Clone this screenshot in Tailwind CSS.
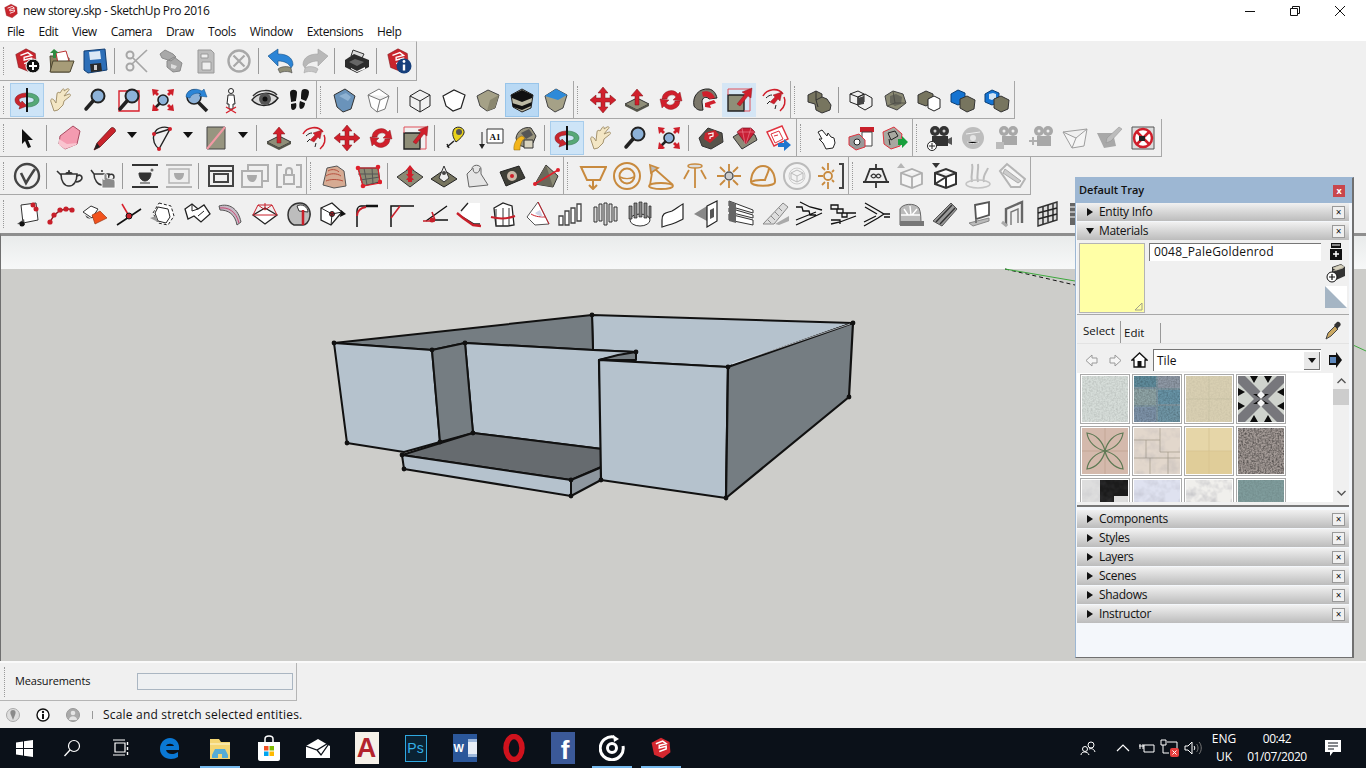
<!DOCTYPE html>
<html>
<head>
<meta charset="utf-8">
<title>new storey.skp - SketchUp Pro 2016</title>
<script src="https://cdn.jsdelivr.net/npm/@tailwindcss/browser@4"></script>
</head>
<body class="relative w-[1366px] h-[768px] overflow-hidden flex flex-col bg-[#f0f0f0] text-[#111] text-[12px] [font-family:'Open_Sans',sans-serif]">

<!-- shared icons -->
<svg class="absolute w-0 h-0">
  <defs>
    <filter id="n" x="0" y="0" width="100%" height="100%"><feTurbulence type="fractalNoise" baseFrequency=".55" numOctaves="2" seed="4"/><feColorMatrix values="0 0 0 0 0 0 0 0 0 0 0 0 0 0 0 1.6 0 0 0 -.55"/></filter>
    <filter id="m" x="0" y="0" width="100%" height="100%"><feTurbulence type="fractalNoise" baseFrequency=".09" numOctaves="3" seed="9"/><feColorMatrix values="0 0 0 0 .3 0 0 0 0 .3 0 0 0 0 .35 2.2 0 0 0 -.95"/></filter>
    <symbol id="logo" viewBox="0 0 28 28"><path d="M3 8 14 2l10 5 1 12-9 7-10-4z" fill="#c9252d" stroke="#7d1418" stroke-width=".6"/><path d="M8 9l8-3 4 3-8 2v3l8-2v3l-8 3" fill="none" stroke="#fff" stroke-width="1.500"/></symbol>
    <symbol id="orbit" viewBox="0 0 28 28"><path d="M14 7C7 7 2 10 2 14c0 3 2 5 5 6l-1 3 8-3-5-5-1 2c-1-1-2-2-2-3 0-2 4-3 8-3z" fill="#c8252d" stroke="#7d1418" stroke-width=".5"/><path d="M14 7c7 0 12 3 12 7 0 4-5 7-12 7v-4c4 0 7-1 7-3s-3-3-7-3z" fill="#56a877" stroke="#2b6b44" stroke-width=".5"/><path d="M14 2v24" stroke="#111" stroke-width="2"/></symbol>
    <symbol id="hand" viewBox="0 0 28 28"><path d="M7 25 4 16c-1-3 1-4 3-2l2 3 1-9c0-2 2-2 3-1l2-3c1-2 3-1 2 1l3-2c2-1 3 1 1 2l-4 5 5-2c2 0 2 2 0 3l-5 4-1 4-5 5z" fill="#f3e6c4" stroke="#a5946f"/></symbol>
    <symbol id="zoom" viewBox="0 0 28 28"><circle cx="17" cy="10" r="6.500" fill="#8db2d8" stroke="#222" stroke-width="2"/><path d="M12 15 5 23" stroke="#222" stroke-width="3.500" stroke-linecap="round"/></symbol>
    <symbol id="extents" viewBox="0 0 28 28"><circle cx="14" cy="14" r="5" fill="#8db2d8" stroke="#222" stroke-width="1.600"/><path d="M11 17l-6 6" stroke="#222" stroke-width="2.500"/><path d="M3 3l7 1-2 2 2 2-2 2-2-2-2 2zM25 3l-1 7-2-2-2 2-2-2 2-2-2-2zM25 25l-7-1 2-2-2-2 2-2 2 2 2-2z" fill="#cf1f2a"/><path d="M3 25l1-7 2 2 2 2 2 2-2 1z" fill="#cf1f2a"/></symbol>
    <symbol id="move" viewBox="0 0 28 28"><path d="M14 1l5 6h-3v5h5V9l6 5-6 5v-3h-5v5h3l-5 6-5-6h3v-5H7v3l-6-5 6-5v3h5V7H9z" fill="#d01f2b" stroke="#7d1418" stroke-width=".5"/></symbol>
    <symbol id="push" viewBox="0 0 28 28"><path d="M2 18l12-6 12 6-12 6z" fill="#8f8e78" stroke="#333"/><path d="M2 18v2l12 6 12-6v-2l-12 6z" fill="#55554a"/><path d="M14 3l6 7h-4v9h-4v-9H8z" fill="#d01f2b" stroke="#7d1418" stroke-width=".5"/></symbol>
    <symbol id="rotate" viewBox="0 0 28 28"><path d="M5 13a9 9 0 0 1 16-5l2-2 2 9-9-1 3-3a5 5 0 0 0-9 2zM23 15a9 9 0 0 1-16 5l-2 2-2-9 9 1-3 3a5 5 0 0 0 9-2z" fill="#d01f2b" stroke="#7d1418" stroke-width=".4"/></symbol>
    <symbol id="scale" viewBox="0 0 28 28"><path d="M3 9h16v16H3z" fill="#8f8e78" stroke="#222" stroke-width="1.400"/><path d="M3 3h22v22H19" fill="none" stroke="#e0505a"/><path d="M3 3v6" stroke="#e0505a"/><path d="M12 18 20 8l-3-2 10-4-1 10-3-2-8 10z" fill="#d01f2b" stroke="#7d1418" stroke-width=".4"/></symbol>
    <symbol id="offset" viewBox="0 0 28 28"><path d="M4 10C8 3 19 1 24 8" fill="none" stroke="#d01f2b" stroke-width="1.500"/><path d="M21 25c5-4 6-10 4-14" fill="none" stroke="#d01f2b" stroke-width="1.500"/><path d="M7 12c2-2 4-3 6-3M8 18l3-3M16 23l1-4" stroke="#222" fill="none"/><path d="M11 16l5-5-2-2 9-3-2 9-2-2-4 5z" fill="#d01f2b" stroke="#7d1418" stroke-width=".4"/></symbol>
    <symbol id="gbox" viewBox="0 0 28 28"><path d="M4 10 12 5l10 3 3 9-9 7-10-4z" fill="#8b8a74" stroke="#444"/><path d="M12 5l2 12-8 3M14 17l11 0" stroke="#55554a" fill="none"/></symbol>
    <symbol id="wire" viewBox="0 0 28 28"><path d="M4 10l10-6 10 5v11l-10 6-10-6zM4 10l10 5 10-6M14 15v11" fill="none" stroke="#222"/></symbol>
  </defs>
</svg>

<!-- title bar -->
<header class="h-[22px] bg-white flex items-center pl-[3px] shrink-0">
  <svg class="w-4 h-4"><use href="#logo"/></svg>
  <span class="ml-[4px] text-[12px] tracking-[-0.4px]">new storey.skp - SketchUp Pro 2016</span>
  <div class="ml-auto flex items-center pr-[20px] gap-[33px]">
    <svg class="w-3 h-3" viewBox="0 0 12 12"><path d="M1 6.500h10" stroke="#111"/></svg>
    <svg class="w-3 h-3" viewBox="0 0 12 12"><path d="M1.500 3.500h7v7h-7zM3.500 3V1.500h7v7H9" fill="none" stroke="#111"/></svg>
    <svg class="w-3 h-3" viewBox="0 0 12 12"><path d="M1 1l10 10M11 1 1 11" stroke="#111"/></svg>
  </div>
</header>

<!-- menu -->
<nav class="h-[19px] bg-white flex items-center pl-[7px] gap-[14px] shrink-0 text-[12px] tracking-[-0.4px]">
  <span>File</span><span>Edit</span><span>View</span><span>Camera</span><span>Draw</span><span>Tools</span><span>Window</span><span>Extensions</span><span>Help</span>
</nav>

<!-- toolbar rows -->
<div class="h-[40px] flex shrink-0">
  <div class="flex items-center pl-[3px] border-r border-b border-t border-t-[#e4e4e4] border-[#a8a8a8]">
    <i class="w-[7px] h-[28px] border-l border-dotted border-[#999]"></i>
    <b class="w-[34px] h-[34px] flex items-center justify-center"><svg class="w-7 h-7" viewBox="0 0 28 28"><use href="#logo" width="26" height="26"/><circle cx="20" cy="19" r="7" fill="#111" stroke="#fff"/><path d="M16 19h8M20 15v8" stroke="#fff" stroke-width="2"/></svg></b>
    <b class="w-[34px] h-[34px] flex items-center justify-center"><svg class="w-7 h-7" viewBox="0 0 28 28"><path d="M3 9h7l2 2h10v14H4z" fill="#8a7f5c" stroke="#4d4630"/><path d="M9 6l10-2 3 10-11 2z" fill="#fff" stroke="#b33"/><path d="M6 14h21l-4 11H3z" fill="#a79c78" stroke="#4d4630"/><path d="M7 2l5 4H9v5H6V6H3z" fill="#2f8a3f"/></svg></b>
    <b class="w-[34px] h-[34px] flex items-center justify-center"><svg class="w-7 h-7" viewBox="0 0 28 28"><path d="M3 4l21-2 2 21-19 3-4-3z" fill="#2d6fb8" stroke="#123e72"/><path d="M8 5l11-1 1 8-11 1z" fill="#dbe8f5"/><path d="M9 17l11-1 1 8-11 1z" fill="#2a2a2a"/><path d="M13 18l3 0 0 5-3 0z" fill="#ccc"/></svg></b>
    <i class="w-px h-[26px] bg-[#9a9a9a] ml-[2px] mr-[5px]"></i>
    <b class="w-[34px] h-[34px] flex items-center justify-center"><svg class="w-7 h-7" viewBox="0 0 28 28"><path d="M9 17 24 3M10 11l14 14" stroke="#a6a6a6" stroke-width="1.700" fill="none"/><circle cx="7" cy="8" r="3.500" fill="none" stroke="#a6a6a6" stroke-width="2"/><circle cx="7" cy="20" r="3.500" fill="none" stroke="#a6a6a6" stroke-width="2"/></svg></b>
    <b class="w-[34px] h-[34px] flex items-center justify-center"><svg class="w-7 h-7" viewBox="0 0 28 28"><path d="M3 7l5-4 8 4 3 3-5 4-9-3zM10 14l7-4 8 6-2 8-7 1-6-5z" fill="#a8a8a8" stroke="#8a8a8a"/><path d="M14 17l6 2-2 3-4-1z" fill="#ddd"/></svg></b>
    <b class="w-[34px] h-[34px] flex items-center justify-center"><svg class="w-7 h-7" viewBox="0 0 28 28"><path d="M7 3h13l3 3v20H7z" fill="#bdbdbd" stroke="#999"/><path d="M10 7h7v4h-7zM11 15h9v8h-9z" fill="#eee" stroke="#999"/></svg></b>
    <b class="w-[34px] h-[34px] flex items-center justify-center"><svg class="w-7 h-7" viewBox="0 0 28 28"><circle cx="14" cy="14" r="10.500" fill="none" stroke="#a8a8a8" stroke-width="2.400"/><path d="M8.500 8.500l11 11M19.500 8.500l-11 11" stroke="#a8a8a8" stroke-width="2.200"/></svg></b>
    <i class="w-px h-[26px] bg-[#9a9a9a] ml-[2px] mr-[5px]"></i>
    <b class="w-[34px] h-[34px] flex items-center justify-center"><svg class="w-7 h-7" viewBox="0 0 28 28"><path d="M1 9l10-7v5c8 0 15 3 15 11l-2 3c-2-5-7-7-13-7v5z" fill="#2c85d6" stroke="#124f87" stroke-width=".6"/><path d="M11 22c4-3 10-3 13-1l1 5c-3-2-9-2-12 0z" fill="#8f8e78" stroke="#444" stroke-width=".6"/></svg></b>
    <b class="w-[34px] h-[34px] flex items-center justify-center"><svg class="w-7 h-7" viewBox="0 0 28 28"><path d="M27 9 17 2v5C9 7 2 10 2 18l2 3c2-5 7-7 13-7v5z" fill="#b8b8b8" stroke="#a0a0a0" stroke-width=".6"/><path d="M17 22c-4-3-10-3-13-1l-1 5c3-2 9-2 12 0z" fill="#c4c4c4" stroke="#a6a6a6" stroke-width=".6"/></svg></b>
    <i class="w-px h-[26px] bg-[#9a9a9a] ml-[2px] mr-[5px]"></i>
    <b class="w-[34px] h-[34px] flex items-center justify-center"><svg class="w-7 h-7" viewBox="0 0 28 28"><path d="M10 3l11 4-3 6-10-4z" fill="#ddd" stroke="#333"/><path d="M2 13l9-6 15 6v7l-12 6-12-6z" fill="#2c2c2c"/><path d="M6 15l6-3 9 3-7 4z" fill="#666"/><path d="M8 21l6 3 8-4v2l-8 3-6-3z" fill="#fff"/></svg></b>
    <i class="w-px h-[26px] bg-[#9a9a9a] ml-[2px] mr-[5px]"></i>
    <b class="w-[34px] h-[34px] flex items-center justify-center"><svg class="w-7 h-7" viewBox="0 0 28 28"><use href="#logo" width="26" height="26"/><circle cx="19" cy="19" r="7.500" fill="#17407c"/><path d="M19 17.500v6" stroke="#fff" stroke-width="2.400"/><circle cx="19" cy="14.500" r="1.400" fill="#fff"/></svg></b>
  </div>
</div>

<div class="h-[38px] flex shrink-0">
  <div class="flex border-b border-r border-[#a8a8a8]">
  <div class="flex items-center pl-[3px]">
    <i class="w-[7px] h-[28px] border-l border-dotted border-[#999]"></i>
    <b class="w-[34px] h-[34px] flex items-center justify-center bg-[#cde4f7] border border-[#a8cdec]"><svg class="w-7 h-7"><use href="#orbit"/></svg></b>
    <b class="w-[34px] h-[34px] flex items-center justify-center"><svg class="w-7 h-7"><use href="#hand"/></svg></b>
    <b class="w-[34px] h-[34px] flex items-center justify-center"><svg class="w-7 h-7"><use href="#zoom"/></svg></b>
    <b class="w-[34px] h-[34px] flex items-center justify-center"><svg class="w-7 h-7" viewBox="0 0 28 28"><path d="M4 5h20v20H4z" fill="none" stroke="#d8202c" stroke-width="1.400"/><use href="#zoom" width="28" height="28"/></svg></b>
    <b class="w-[34px] h-[34px] flex items-center justify-center"><svg class="w-7 h-7"><use href="#extents"/></svg></b>
    <b class="w-[34px] h-[34px] flex items-center justify-center"><svg class="w-7 h-7" viewBox="0 0 28 28"><circle cx="11" cy="11" r="7" fill="#8db2d8" stroke="#222" stroke-width="1.500"/><path d="M3 11C3 4 12 1 19 5l2-2 3 8-8-1 2-2c-4-2-10 0-11 4z" fill="#2c85d6" stroke="#124f87" stroke-width=".5"/><path d="M15 16l9 9" stroke="#222" stroke-width="3.500"/></svg></b>
    <b class="w-[34px] h-[34px] flex items-center justify-center"><svg class="w-7 h-7" viewBox="0 0 28 28"><circle cx="14" cy="5" r="2.500" fill="#fff" stroke="#222"/><path d="M11 9h6l1 9h-2v5h-4v-5h-2z" fill="#fff" stroke="#222"/><path d="M9 21l10 6M19 21 9 27" stroke="#d8202c" stroke-width="1.400"/></svg></b>
    <b class="w-[34px] h-[34px] flex items-center justify-center"><svg class="w-7 h-7" viewBox="0 0 28 28"><path d="M1 14C7 6 19 5 27 12c-6 9-19 10-26 2z" fill="#d8d8d8" stroke="#222" stroke-width="1.400"/><circle cx="14" cy="13" r="6" fill="#555"/><circle cx="14" cy="13" r="2.500" fill="#111"/><path d="M2 10C8 3 20 3 26 9" fill="none" stroke="#333" stroke-width="1.500"/></svg></b>
    <b class="w-[34px] h-[34px] flex items-center justify-center"><svg class="w-7 h-7" viewBox="0 0 28 28"><path d="M5 7c0-4 6-4 7-1 0 5-1 7-1 9l-5 1c0-3-1-6-1-9zM6 18l5-1c1 3 0 7-3 7-2 0-2-3-2-6zM17 4c2-2 7-1 7 2 0 4-2 7-3 9l-5-2c0-3 0-7 1-9zM15 15l5 2c0 3-2 6-4 6s-2-5-1-8z" fill="#151515"/></svg></b>
  </div>
  <div class="flex items-center pl-[3px] border-l border-[#a8a8a8]">
    <i class="w-[7px] h-[28px] border-l border-dotted border-[#999]"></i>
    <b class="w-[34px] h-[34px] flex items-center justify-center"><svg class="w-7 h-7" viewBox="0 0 28 28"><path d="M4 9l11-6 10 7-4 13-8 3-6-5z" fill="#6a93ba" stroke="#333"/><path d="M9 10l7-3 5 4-3 4z" fill="#8fb2d2"/></svg></b>
    <b class="w-[34px] h-[34px] flex items-center justify-center"><svg class="w-7 h-7" viewBox="0 0 28 28"><path d="M4 9l11-6 10 7-4 13-8 3-6-5zM4 9l12 5 9-4M16 14l-3 12" fill="#fff" stroke="#777"/></svg></b>
    <i class="w-px h-[26px] bg-[#9a9a9a] ml-[2px] mr-[5px]"></i>
    <b class="w-[34px] h-[34px] flex items-center justify-center"><svg class="w-7 h-7"><use href="#wire"/></svg></b>
    <b class="w-[34px] h-[34px] flex items-center justify-center"><svg class="w-7 h-7" viewBox="0 0 28 28"><path d="M3 10l11-6 11 5-4 13-8 3-7-5z" fill="#fff" stroke="#222" stroke-width="1.200"/></svg></b>
    <b class="w-[34px] h-[34px] flex items-center justify-center"><svg class="w-7 h-7" viewBox="0 0 28 28"><path d="M3 10l11-6 11 5-4 13-8 3-7-5z" fill="#a5a187" stroke="#444"/><path d="M21 22l4-13-9 5-3 11z" fill="#8a876f"/></svg></b>
    <b class="w-[34px] h-[34px] flex items-center justify-center bg-[#b9d9f4] border border-[#98c5ea]"><svg class="w-7 h-7" viewBox="0 0 28 28"><path d="M3 9l11-6 11 6-2 13-9 4-9-5z" fill="#bbb8a3" stroke="#222"/><path d="M3 9l11-5 11 5-1 3-10 4-10-4zM4 17l10 3 10-4-1 4-9 4-9-3z" fill="#111"/></svg></b>
    <b class="w-[34px] h-[34px] flex items-center justify-center"><svg class="w-7 h-7" viewBox="0 0 28 28"><path d="M3 10l11-7 11 6-4 13-8 4-7-5z" fill="#a5a187" stroke="#444"/><path d="M3 10l11-7 11 6-9 5z" fill="#2e8ad8"/></svg></b>
  </div>
  <div class="flex items-center pl-[3px] border-l border-[#a8a8a8]">
    <i class="w-[9px] h-[28px] border-l border-dotted border-[#999]"></i>
    <b class="w-[34px] h-[34px] flex items-center justify-center"><svg class="w-7 h-7"><use href="#move"/></svg></b>
    <b class="w-[34px] h-[34px] flex items-center justify-center"><svg class="w-7 h-7"><use href="#push"/></svg></b>
    <b class="w-[34px] h-[34px] flex items-center justify-center"><svg class="w-7 h-7"><use href="#rotate"/></svg></b>
    <b class="w-[34px] h-[34px] flex items-center justify-center"><svg class="w-7 h-7" viewBox="0 0 28 28"><path d="M3 20C1 10 8 2 18 3c5 1 7 5 8 9l-8 1c-2-3-7-2-7 3l1 8c-4 1-7-1-9-4z" fill="#7b776a" stroke="#222"/><path d="M11 6c6-2 11 1 13 6l-5 1c-2-2-4-3-7-2z" fill="#d01f2b"/><path d="M14 17l9-3 2 3-6 2 1 3-6-1z" fill="#d01f2b"/></svg></b>
    <b class="w-[34px] h-[34px] flex items-center justify-center bg-[#d5e6f5]"><svg class="w-7 h-7"><use href="#scale"/></svg></b>
    <b class="w-[34px] h-[34px] flex items-center justify-center"><svg class="w-7 h-7"><use href="#offset"/></svg></b>
  </div>
  <div class="flex items-center pl-[3px] border-l border-[#a8a8a8]">
    <i class="w-[8px] h-[28px] border-l border-dotted border-[#999]"></i>
    <b class="w-[34px] h-[34px] flex items-center justify-center"><svg class="w-7 h-7" viewBox="0 0 28 28"><path d="M3 9l8-4 6 3v3l5 2 4 6-1 5-8 3-6-3-1-6-7-2z" fill="#77755f" stroke="#333"/><path d="M11 5v9l6-3M11 14l2 7" stroke="#333" fill="none"/></svg></b>
    <i class="w-px h-[26px] bg-[#9a9a9a] ml-[2px] mr-[5px]"></i>
    <b class="w-[34px] h-[34px] flex items-center justify-center"><svg class="w-7 h-7" viewBox="0 0 28 28"><path d="M3 8l8-3 6 3v8l-6 3-8-3zM11 11l7-3 7 4v8l-7 4-7-4zM3 8l8 3v8M17 8l-6 3" fill="none" stroke="#222"/><path d="M11 12l6-2v8l-6 1z" fill="#444"/></svg></b>
    <b class="w-[34px] h-[34px] flex items-center justify-center"><svg class="w-7 h-7" viewBox="0 0 28 28"><use href="#gbox" width="28" height="28"/><path d="M9 10l6-2 6 3-1 7-6 2-5-3z" fill="#444" opacity=".5"/></svg></b>
    <b class="w-[34px] h-[34px] flex items-center justify-center"><svg class="w-7 h-7" viewBox="0 0 28 28"><path d="M3 9l8-4 7 3v8l-7 4-8-3z" fill="#77755f" stroke="#333"/><path d="M13 13l6-3 6 3v9l-6 3-6-3z" fill="#fff" stroke="#222"/></svg></b>
    <b class="w-[34px] h-[34px] flex items-center justify-center"><svg class="w-7 h-7" viewBox="0 0 28 28"><path d="M2 8l7-4 7 3v9l-7 3-7-3z" fill="#1473d1" stroke="#0c3f75"/><path d="M11 13l7-3 8 4-1 9-7 3-7-4z" fill="#77755f" stroke="#333"/></svg></b>
    <b class="w-[34px] h-[34px] flex items-center justify-center"><svg class="w-7 h-7" viewBox="0 0 28 28"><path d="M2 8l7-4 7 3v9l-7 3-7-3z" fill="#1473d1" stroke="#0c3f75"/><path d="M6 8l4-1 3 1v4l-4 2-3-1z" fill="#cfe3f5"/><path d="M11 13l7-3 8 4-1 9-7 3-7-4z" fill="#77755f" stroke="#333"/></svg></b>
  </div>
  </div>
</div>

<div class="h-[38px] flex shrink-0">
  <div class="flex border-b border-r border-[#a8a8a8]">
  <div class="flex items-center pl-[3px]">
    <i class="w-[7px] h-[28px] border-l border-dotted border-[#999]"></i>
    <b class="w-[34px] h-[34px] flex items-center justify-center"><svg class="w-7 h-7" viewBox="0 0 28 28"><path d="M9 5l11 11h-5l3 7-3 1-3-7-3 3z" fill="#111"/></svg></b>
    <i class="w-px h-[26px] bg-[#9a9a9a] ml-[2px] mr-[5px]"></i>
    <b class="w-[34px] h-[34px] flex items-center justify-center"><svg class="w-7 h-7" viewBox="0 0 28 28"><path d="M5 12 18 2l7 5-3 13-12 5-6-5z" fill="#f49bb0" stroke="#a84a60"/><path d="M4 15l8 5 10-1-1 2-11 4-6-4z" fill="#f9c4cf"/></svg></b>
    <b class="w-[34px] h-[34px] flex items-center justify-center ml-[2px]"><svg class="w-7 h-7" viewBox="0 0 28 28"><path d="M3 26l3-7L20 4c2-2 6 2 4 4L9 23z" fill="#c9242c" stroke="#5c1013" stroke-width=".7"/><path d="M3 26l3-7 3 4z" fill="#222"/></svg></b>
    <b class="w-[23px] h-[34px] flex items-center justify-center"><svg class="w-[12px] h-[8px] mb-[6px] -ml-[4px]" viewBox="0 0 12 8"><path d="M1 1h10L6 7z" fill="#111"/></svg></b>
    <b class="w-[34px] h-[34px] flex items-center justify-center"><svg class="w-7 h-7" viewBox="0 0 28 28"><path d="M6 10C9 2 19 2 22 5L11 25C7 22 4 16 6 10zM6 10l16-5" fill="none" stroke="#222" stroke-width="1.400"/><circle cx="6" cy="10" r="2" fill="#d01f2b"/><circle cx="22" cy="5" r="2" fill="#d01f2b"/><circle cx="11" cy="25" r="2" fill="#d01f2b"/></svg></b>
    <b class="w-[20px] h-[34px] flex items-center justify-center"><svg class="w-[12px] h-[8px] mb-[6px] -ml-[3px]" viewBox="0 0 12 8"><path d="M1 1h10L6 7z" fill="#111"/></svg></b>
    <b class="w-[34px] h-[34px] flex items-center justify-center"><svg class="w-7 h-7" viewBox="0 0 28 28"><path d="M5 3h18v22H5z" fill="#979580" stroke="#444"/><path d="M5 25 23 3" stroke="#f29aa5" stroke-width="2"/></svg></b>
    <b class="w-[20px] h-[34px] flex items-center justify-center"><svg class="w-[12px] h-[8px] mb-[6px]" viewBox="0 0 12 8"><path d="M1 1h10L6 7z" fill="#111"/></svg></b>
    <i class="w-px h-[26px] bg-[#9a9a9a] ml-[3px] mr-[5px]"></i>
    <b class="w-[34px] h-[34px] flex items-center justify-center"><svg class="w-7 h-7"><use href="#push"/></svg></b>
    <b class="w-[34px] h-[34px] flex items-center justify-center"><svg class="w-7 h-7"><use href="#offset"/></svg></b>
    <b class="w-[34px] h-[34px] flex items-center justify-center"><svg class="w-7 h-7"><use href="#move"/></svg></b>
    <b class="w-[34px] h-[34px] flex items-center justify-center"><svg class="w-7 h-7"><use href="#rotate"/></svg></b>
    <b class="w-[34px] h-[34px] flex items-center justify-center"><svg class="w-7 h-7"><use href="#scale"/></svg></b>
    <i class="w-px h-[26px] bg-[#9a9a9a] ml-[2px] mr-[5px]"></i>
    <b class="w-[34px] h-[34px] flex items-center justify-center"><svg class="w-7 h-7" viewBox="0 0 28 28"><path d="M11 5c4-4 11-1 10 4-1 3-4 6-8 9-2-3-5-8-2-13z" fill="#e9d21b" stroke="#222"/><circle cx="16" cy="8" r="3" fill="#555"/><path d="M11 17l-7 6M4 20l2 4" stroke="#222" stroke-width="1.500"/></svg></b>
    <b class="w-[34px] h-[34px] flex items-center justify-center"><svg class="w-7 h-7" viewBox="0 0 28 28"><path d="M10 5h16v14H10z" fill="#fff" stroke="#333"/><text x="18" y="15.500" text-anchor="middle" font-size="9" font-family="Liberation Serif,serif" fill="#111">A1</text><path d="M5 8v13" stroke="#222"/><path d="M2 20h6l-3 5z" fill="#222"/></svg></b>
    <b class="w-[34px] h-[34px] flex items-center justify-center"><svg class="w-7 h-7" viewBox="0 0 28 28"><path d="M5 14c1-7 8-12 15-10l5 8-3 7-8 4-7-2z" fill="#9a957e" stroke="#333"/><path d="M10 9l8-4 4 6-7 4z" fill="#555"/><path d="M3 26c-1-6 3-13 8-14l3 2c-3 2-5 6-5 12z" fill="#f3b51c" stroke="#8a6508" stroke-width=".5"/><path d="M13 16h9v8h-9z" fill="#d8d3bf" stroke="#333"/></svg></b>
    <i class="w-px h-[26px] bg-[#9a9a9a] ml-[2px] mr-[5px]"></i>
    <b class="w-[34px] h-[34px] flex items-center justify-center bg-[#cde4f7] border border-[#a8cdec]"><svg class="w-7 h-7"><use href="#orbit"/></svg></b>
    <b class="w-[34px] h-[34px] flex items-center justify-center"><svg class="w-7 h-7"><use href="#hand"/></svg></b>
    <b class="w-[34px] h-[34px] flex items-center justify-center"><svg class="w-7 h-7"><use href="#zoom"/></svg></b>
    <b class="w-[34px] h-[34px] flex items-center justify-center"><svg class="w-7 h-7"><use href="#extents"/></svg></b>
    <i class="w-px h-[26px] bg-[#9a9a9a] ml-[2px] mr-[5px]"></i>
    <b class="w-[34px] h-[34px] flex items-center justify-center"><svg class="w-7 h-7" viewBox="0 0 28 28"><path d="M2 14 11 4l14 5 1 9-12 7-9-3z" fill="#57534a" stroke="#333"/><path d="M8 9l10-3 4 5-9 8-6-4z" fill="#c9252d"/><path d="M11 10l5-1v3l-3 1v2" fill="none" stroke="#fff" stroke-width="1.200"/></svg></b>
    <b class="w-[34px] h-[34px] flex items-center justify-center"><svg class="w-7 h-7" viewBox="0 0 28 28"><path d="M2 13l9 12 15-9-2-5-11-5z" fill="#8d8a78" stroke="#333"/><path d="M6 8l5-4h9l4 4-9 12z" fill="#c81f35" stroke="#761020" stroke-width=".7"/><path d="M6 8h18M11 4l3 16M20 4l-5 16" stroke="#f08a99" stroke-width=".6"/></svg></b>
    <b class="w-[34px] h-[34px] flex items-center justify-center"><svg class="w-7 h-7" viewBox="0 0 28 28"><path d="M2 8 17 2l6 13-14 7z" fill="#fff" stroke="#e0333f" stroke-width="1.400"/><path d="M6 10l8-3 4 8-8 4zM9 12l4-1" fill="none" stroke="#e0333f"/><path d="M13 19h6v-4l7 6-7 6v-4h-6z" fill="#1f76cf"/></svg></b>
  </div>
  <div class="flex items-center pl-[3px] border-l border-[#a8a8a8]">
    <i class="w-[10px] h-[28px] border-l border-dotted border-[#999]"></i>
    <b class="w-[34px] h-[34px] flex items-center justify-center"><svg class="w-7 h-7" viewBox="0 0 28 28"><path d="M5 8l4-2 5 6 1-3 3 4 3 1 1 5-2 5-7 1-3-6-4-4 3 0z" fill="#fff" stroke="#222"/></svg></b>
    <b class="w-[34px] h-[34px] flex items-center justify-center"><svg class="w-7 h-7" viewBox="0 0 28 28"><path d="M13 3h14v5H13z" fill="#c81f2a"/><path d="M15 8h10v14H15z" fill="#fff" stroke="#444"/><path d="M2 13l10-3 6 6v7l-9 3-7-5z" fill="#999" stroke="#e0333f"/><circle cx="10" cy="18" r="3" fill="#fff" stroke="#222"/></svg></b>
    <b class="w-[34px] h-[34px] flex items-center justify-center"><svg class="w-7 h-7" viewBox="0 0 28 28"><path d="M2 8l11-5 8 7-2 12-9 3-7-5z" fill="#a8a8a0" stroke="#e0333f"/><path d="M7 9l7-2 3 5-7 4zM8 15l1 6" stroke="#222" fill="none"/><path d="M17 15h4v-3l6 6-6 6v-3h-4z" fill="#18a03d"/></svg></b>
  </div>
  <div class="flex items-center pl-[3px] border-l border-[#a8a8a8] pr-[1px]">
    <i class="w-[6px] h-[28px] border-l border-dotted border-[#999]"></i>
    <b class="w-[34px] h-[34px] flex items-center justify-center"><svg class="w-7 h-7" viewBox="0 0 28 28"><circle cx="10" cy="7" r="5" fill="#333"/><circle cx="19" cy="7" r="5" fill="#333"/><circle cx="10" cy="7" r="1.500" fill="#ccc"/><circle cx="19" cy="7" r="1.500" fill="#ccc"/><path d="M7 12h16v10H7z" fill="#333"/><path d="M23 15l4-2v8l-4-2z" fill="#555"/><circle cx="7" cy="22" r="4.500" fill="#fff" stroke="#222"/><path d="M4 22h6M7 19v6" stroke="#222"/></svg></b>
    <b class="w-[34px] h-[34px] flex items-center justify-center"><svg class="w-7 h-7" viewBox="0 0 28 28"><circle cx="14" cy="14" r="11" fill="#bdbdbd"/><circle cx="14" cy="14" r="3" fill="#e5e5e5"/><path d="M7 10l14-2M8 18c3 2 8 2 12 0" stroke="#eee"/></svg></b>
    <b class="w-[34px] h-[34px] flex items-center justify-center"><svg class="w-7 h-7" viewBox="0 0 28 28"><circle cx="11" cy="7" r="5" fill="#a8a8a8"/><circle cx="20" cy="7" r="5" fill="#a8a8a8"/><circle cx="11" cy="7" r="1.500" fill="#eee"/><circle cx="20" cy="7" r="1.500" fill="#eee"/><path d="M9 12h15v9H9z" fill="#a8a8a8"/><path d="M3 18h8v7H3z" fill="#bbb"/></svg></b>
    <b class="w-[34px] h-[34px] flex items-center justify-center"><svg class="w-7 h-7" viewBox="0 0 28 28"><circle cx="12" cy="7" r="5" fill="#a8a8a8"/><circle cx="21" cy="7" r="5" fill="#a8a8a8"/><circle cx="12" cy="7" r="1.500" fill="#eee"/><circle cx="21" cy="7" r="1.500" fill="#eee"/><path d="M10 12h14v10H10z" fill="#a8a8a8"/><path d="M2 17h8M6 13v8" stroke="#b0b0b0" stroke-width="2"/></svg></b>
    <b class="w-[34px] h-[34px] flex items-center justify-center"><svg class="w-7 h-7" viewBox="0 0 28 28"><path d="M2 8l24-3-3 17-12 2zM2 8l13 6 11-9M11 24l4-10" fill="#f5f5f5" stroke="#9e9e9e"/></svg></b>
    <b class="w-[34px] h-[34px] flex items-center justify-center"><svg class="w-7 h-7" viewBox="0 0 28 28"><path d="M2 9h16l3 13-12 2z" fill="#a8a8a8"/><path d="M12 14l12-11 3 2-11 12-5 2z" fill="#bcbcbc" stroke="#8f8f8f" stroke-width=".5"/></svg></b>
    <b class="w-[34px] h-[34px] flex items-center justify-center"><svg class="w-7 h-7" viewBox="0 0 28 28"><path d="M3 3h22v22H3z" fill="#ddd" stroke="#555"/><circle cx="14" cy="14" r="9" fill="#fff" stroke="#d01f2b" stroke-width="2.500"/><path d="M8 8l12 12M20 8 8 20" stroke="#d01f2b" stroke-width="2.500"/><path d="M10 12h6v5h-6z" fill="#222"/></svg></b>
  </div>
  </div>
</div>

<div class="h-[38px] flex shrink-0">
  <div class="flex border-b border-r border-[#a8a8a8]">
  <div class="flex items-center pl-[3px]">
    <i class="w-[7px] h-[28px] border-l border-dotted border-[#999]"></i>
    <b class="w-[34px] h-[34px] flex items-center justify-center"><svg class="w-7 h-7" viewBox="0 0 28 28"><circle cx="14" cy="14" r="12" fill="#f0f0f0" stroke="#444" stroke-width="2.400"/><path d="M8 11l5 10c3-5 6-10 9-14" fill="none" stroke="#444" stroke-width="2.600"/></svg></b>
    <i class="w-px h-[26px] bg-[#9a9a9a] ml-[2px] mr-[5px]"></i>
    <b class="w-[34px] h-[34px] flex items-center justify-center"><svg class="w-7 h-7" viewBox="0 0 28 28"><path d="M6 12h16c0 7-3 12-8 12s-8-5-8-12zM13 9h2M11 12c0-2 6-2 6 0M22 14c3-2 5 0 5 2s-3 4-6 4M6 13 2 9" fill="none" stroke="#333" stroke-width="1.600"/></svg></b>
    <b class="w-[34px] h-[34px] flex items-center justify-center"><svg class="w-7 h-7" viewBox="0 0 28 28"><path d="M5 12h15c0 6-3 11-7 11s-8-5-8-11zM20 13c3-2 5 0 5 2s-3 3-5 3M5 12 2 8M12 9h2" fill="none" stroke="#333" stroke-width="1.500"/><path d="M13 26v-8c0-2 2-2 2 0v-5c0-2 3-2 3 0v3l5 1c2 0 3 1 3 3v6z" fill="#8a8a8a" stroke="#fff" stroke-width=".8"/></svg></b>
    <i class="w-px h-[26px] bg-[#9a9a9a] ml-[2px] mr-[5px]"></i>
    <b class="w-[34px] h-[34px] flex items-center justify-center"><svg class="w-7 h-7" viewBox="0 0 28 28"><path d="M1 3h26M1 25h26" stroke="#333" stroke-width="2"/><path d="M8 11h12c0 5-3 8-6 8s-6-3-6-8zM9 21h10" fill="#333" stroke="#333"/><circle cx="21" cy="8" r="1.500" fill="#666"/></svg></b>
    <b class="w-[34px] h-[34px] flex items-center justify-center"><svg class="w-7 h-7" viewBox="0 0 28 28"><path d="M1 3h26M1 25h26" stroke="#b5b5b5" stroke-width="2"/><path d="M4 7h20v14H4z" fill="#eee" stroke="#b5b5b5" stroke-width="1.500"/><path d="M9 11h10c0 4-2 7-5 7s-5-3-5-7z" fill="#aaa"/></svg></b>
    <i class="w-px h-[26px] bg-[#9a9a9a] ml-[2px] mr-[5px]"></i>
    <b class="w-[34px] h-[34px] flex items-center justify-center"><svg class="w-7 h-7" viewBox="0 0 28 28"><path d="M2 4h24v20H2zM2 9h24M7 12h14v8H7z" fill="none" stroke="#444" stroke-width="2"/></svg></b>
    <b class="w-[34px] h-[34px] flex items-center justify-center"><svg class="w-7 h-7" viewBox="0 0 28 28"><path d="M1 9h20v16H1zM7 9V3h20v16h-6" fill="none" stroke="#b0b0b0" stroke-width="2"/><path d="M6 13h10c0 4-2 7-5 7s-5-3-5-7z" fill="#aaa"/></svg></b>
    <b class="w-[34px] h-[34px] flex items-center justify-center"><svg class="w-7 h-7" viewBox="0 0 28 28"><path d="M7 3H2v22h5M21 3h5v22h-5" fill="none" stroke="#b0b0b0" stroke-width="2"/><path d="M9 13h10v9H9zM11 13V9c0-4 6-4 6 0v4" fill="none" stroke="#b0b0b0" stroke-width="2"/></svg></b>
  </div>
  <div class="flex items-center pl-[3px] border-l border-[#a8a8a8]">
    <i class="w-[7px] h-[28px] border-l border-dotted border-[#999]"></i>
    <b class="w-[34px] h-[34px] flex items-center justify-center"><svg class="w-7 h-7" viewBox="0 0 28 28"><path d="M3 23 7 6l10-2 7 5 2 15-12 2z" fill="#d6ab93" stroke="#555"/><path d="M8 9c3-2 8-2 11 1M6 14c4-3 11-3 15 0M6 19c4-2 12-2 17 0" stroke="#b74f3c" fill="none"/></svg></b>
    <b class="w-[34px] h-[34px] flex items-center justify-center"><svg class="w-7 h-7" viewBox="0 0 28 28"><path d="M4 6l20 0 2 14-17 4z" fill="#8b8a74" stroke="#333"/><path d="M10 6l3 17M18 6l1 16M4 12l21 0M6 18l20-3" stroke="#555" fill="none"/><g fill="#e0202c"><circle cx="4" cy="6" r="2.300"/><circle cx="24" cy="5" r="2.300"/><circle cx="26" cy="20" r="2.300"/><circle cx="9" cy="24" r="2.300"/></g><path d="M4 6h20l2 15-17 3z" fill="none" stroke="#e0202c" stroke-width="1.200"/></svg></b>
    <i class="w-px h-[26px] bg-[#9a9a9a] ml-[2px] mr-[5px]"></i>
    <b class="w-[34px] h-[34px] flex items-center justify-center"><svg class="w-7 h-7" viewBox="0 0 28 28"><path d="M1 15 14 6l13 9-13 10z" fill="#8b8a74" stroke="#333"/><path d="M14 3l4 5h-2v4h2l-4 5-4-5h2V8h-2z M14 13l4 5h-2v2h-4v-2h-2z" fill="#d01f2b"/></svg></b>
    <b class="w-[34px] h-[34px] flex items-center justify-center"><svg class="w-7 h-7" viewBox="0 0 28 28"><path d="M1 17 14 8l13 9-13 8z" fill="#77755f" stroke="#222"/><path d="M9 16l5-12 5 12-5 4z" fill="#eee" stroke="#333"/><circle cx="14" cy="11" r="2" fill="#444"/></svg></b>
    <b class="w-[34px] h-[34px] flex items-center justify-center"><svg class="w-7 h-7" viewBox="0 0 28 28"><path d="M8 7c0-5 9-5 9 0v5l7 11-19 2-2-13z" fill="#e5e5e5" stroke="#666"/><path d="M9 6c0 3 1 5 3 5s4-2 4-5" fill="none" stroke="#666"/></svg></b>
    <b class="w-[34px] h-[34px] flex items-center justify-center"><svg class="w-7 h-7" viewBox="0 0 28 28"><path d="M2 10l19-6 6 12-19 8z" fill="#3f3f38" stroke="#222"/><circle cx="14" cy="14" r="5" fill="#c9b8a8"/><circle cx="14" cy="14" r="2" fill="#d01f2b"/></svg></b>
    <b class="w-[34px] h-[34px] flex items-center justify-center"><svg class="w-7 h-7" viewBox="0 0 28 28"><path d="M3 22 14 3l12 11-5 11z" fill="#8b8a74" stroke="#333"/><path d="M14 3 3 22l18 3z" fill="#6a685a"/><path d="M3 22 26 8" stroke="#e0202c" stroke-width="1.600"/><circle cx="3" cy="22" r="2" fill="#e0202c"/><circle cx="26" cy="8" r="2" fill="#e0202c"/></svg></b>
  </div>
  <div class="flex items-center pl-[3px] border-l border-[#a8a8a8]">
    <i class="w-[9px] h-[28px] border-l border-dotted border-[#999]"></i>
    <b class="w-[34px] h-[34px] flex items-center justify-center"><svg class="w-7 h-7" viewBox="0 0 28 28"><path d="M2 5h25l-6 13H8zM14 18v8M10 23l4 4 4-4" fill="none" stroke="#c88a3e" stroke-width="2"/></svg></b>
    <b class="w-[34px] h-[34px] flex items-center justify-center"><svg class="w-7 h-7" viewBox="0 0 28 28"><circle cx="14" cy="14" r="13" fill="none" stroke="#c88a3e" stroke-width="2"/><circle cx="14" cy="14" r="7.500" fill="none" stroke="#c88a3e" stroke-width="2"/><path d="M7 15c4 2 10 2 14 0" fill="none" stroke="#c88a3e" stroke-width="1.600"/></svg></b>
    <b class="w-[34px] h-[34px] flex items-center justify-center"><svg class="w-7 h-7" viewBox="0 0 28 28"><path d="M3 3l8 3-7 5zM5 11 3 23M9 8l17 15" fill="#bbb" stroke="#c88a3e" stroke-width="1.800"/><ellipse cx="14" cy="24" rx="12" ry="3" fill="none" stroke="#c88a3e" stroke-width="1.800"/></svg></b>
    <b class="w-[34px] h-[34px] flex items-center justify-center"><svg class="w-7 h-7" viewBox="0 0 28 28"><ellipse cx="14" cy="4" rx="7" ry="2" fill="#ddd" stroke="#c88a3e" stroke-width="1.500"/><path d="M14 6v20M8 8l-5 9M20 8l5 9" fill="none" stroke="#c88a3e" stroke-width="1.800"/></svg></b>
    <b class="w-[34px] h-[34px] flex items-center justify-center"><svg class="w-7 h-7" viewBox="0 0 28 28"><circle cx="14" cy="14" r="4" fill="#ccc" stroke="#555" stroke-width="1.500"/><path d="M14 2v7M14 19v7M2 14h7M19 14h7M5 5l5 5M18 18l5 5M23 5l-5 5M10 18l-5 5" stroke="#c88a3e" stroke-width="1.800"/></svg></b>
    <b class="w-[34px] h-[34px] flex items-center justify-center"><svg class="w-7 h-7" viewBox="0 0 28 28"><path d="M2 20C2 11 7 4 14 4s12 7 12 16c0 5-24 5-24 0zM2 20c5-3 10-2 14-2 1-4 4-8 4-12" fill="none" stroke="#c88a3e" stroke-width="2"/></svg></b>
    <b class="w-[34px] h-[34px] flex items-center justify-center"><svg class="w-7 h-7" viewBox="0 0 28 28"><circle cx="14" cy="14" r="13" fill="#f3f3f3" stroke="#bbb" stroke-width="2"/><circle cx="14" cy="14" r="8" fill="none" stroke="#ccc"/><path d="M14 8l6 3v6l-6 3-6-3v-6zM14 14l6-3M14 14l-6-3M14 14v6" fill="none" stroke="#bbb"/></svg></b>
    <b class="w-[34px] h-[34px] flex items-center justify-center"><svg class="w-7 h-7" viewBox="0 0 28 28"><circle cx="11" cy="14" r="4" fill="none" stroke="#c88a3e" stroke-width="1.800"/><path d="M11 1v7M11 20v7M1 14h5M5 5l3 3M5 23l3-3M17 8l-2 2M17 20l-2-2" stroke="#c88a3e" stroke-width="1.800"/><path d="M22 2h4v24h-4" fill="none" stroke="#444" stroke-width="2"/></svg></b>
  </div>
  <div class="flex items-center pl-[3px] border-l border-[#a8a8a8] pr-[1px]">
    <i class="w-[7px] h-[28px] border-l border-dotted border-[#999]"></i>
    <b class="w-[34px] h-[34px] flex items-center justify-center"><svg class="w-7 h-7" viewBox="0 0 28 28"><path d="M8 7h12l5 13H3zM14 2v5M14 20v6M1 20h26" fill="none" stroke="#333" stroke-width="1.800"/><path d="M9 14c2-3 4-2 5 0s3 3 5 0c-2-3-4-2-5 0s-3 3-5 0z" fill="none" stroke="#333" stroke-width="1.300"/></svg></b>
    <b class="w-[34px] h-[34px] flex items-center justify-center"><svg class="w-7 h-7" viewBox="0 0 28 28"><path d="M5 11l11-4 10 4v11l-10 4-11-4zM5 11l11 4 10-4M16 15v11" fill="#f5f5f5" stroke="#aeaeae" stroke-width="1.800"/><path d="M5 1l4 5H1z" fill="#b5b5b5"/></svg></b>
    <b class="w-[34px] h-[34px] flex items-center justify-center"><svg class="w-7 h-7" viewBox="0 0 28 28"><path d="M5 11l11-4 10 4v11l-10 4-11-4zM5 11l11 4 10-4M16 15v11M5 22l11-7" fill="#fff" stroke="#333" stroke-width="2"/><path d="M6 6 2 1h8z" fill="#333"/></svg></b>
    <b class="w-[34px] h-[34px] flex items-center justify-center"><svg class="w-7 h-7" viewBox="0 0 28 28"><path d="M8 20C6 12 10 8 8 2M14 20c-2-7 1-12 0-18M20 20c-2-6 2-9 4-14" fill="none" stroke="#bbb" stroke-width="2"/><ellipse cx="14" cy="22" rx="12" ry="4" fill="none" stroke="#c4c4c4" stroke-width="1.500"/></svg></b>
    <b class="w-[34px] h-[34px] flex items-center justify-center"><svg class="w-7 h-7" viewBox="0 0 28 28"><path d="M2 9 9 2l18 15-5 8H13z" fill="#f5f5f5" stroke="#b5b5b5" stroke-width="2"/><path d="M7 7l16 12-3 2L5 11z" fill="#ccc" stroke="#aaa"/></svg></b>
  </div>
  </div>
</div>

<div class="h-[38px] flex shrink-0">
  <div class="flex items-center pl-[3px] overflow-hidden">
    <i class="w-[7px] h-[28px] border-l border-dotted border-[#999]"></i>
    <b class="w-[34px] h-[34px] flex items-center justify-center"><svg class="w-7 h-7" viewBox="0 0 28 28"><path d="M8 5 23 3l2 17-15 3z" fill="#fff" stroke="#333"/><circle cx="20" cy="5" r="2.500" fill="#c81f2a"/><circle cx="23" cy="9" r="2.500" fill="#c81f2a"/><path d="M4 24l7-5 1 6z" fill="#555"/><circle cx="9" cy="24" r="2.500" fill="#111"/></svg></b>
    <b class="w-[34px] h-[34px] flex items-center justify-center"><svg class="w-7 h-7" viewBox="0 0 28 28"><path d="M3 22c3-6 6-10 12-12s8-1 11 0" fill="none" stroke="#8d1a22" stroke-width="1.400"/><g fill="#c81f2a"><circle cx="3" cy="22" r="2.600"/><circle cx="7" cy="15" r="2.600"/><circle cx="13" cy="10" r="2.600"/><circle cx="19" cy="9" r="2.600"/><circle cx="25" cy="10" r="2.600"/></g></svg></b>
    <b class="w-[34px] h-[34px] flex items-center justify-center"><svg class="w-7 h-7" viewBox="0 0 28 28"><path d="M2 12l8-6 7 3-6 9z" fill="#fff" stroke="#333"/><path d="M11 15l8-4 7 7-12 6z" fill="#f1521d" stroke="#8a2b0c" stroke-width=".6"/><path d="M4 15l6 4-4-1z" fill="#444"/></svg></b>
    <b class="w-[34px] h-[34px] flex items-center justify-center"><svg class="w-7 h-7" viewBox="0 0 28 28"><path d="M2 25 26 9" stroke="#111" stroke-width="1.600"/><path d="M7 4l7 12" stroke="#d8202c" stroke-width="1.500"/><circle cx="14" cy="16" r="3" fill="#c81f2a" stroke="#111"/></svg></b>
    <b class="w-[34px] h-[34px] flex items-center justify-center"><svg class="w-7 h-7" viewBox="0 0 28 28"><path d="M10 3 22 6l3 10-6 9-10-2-5-10z" fill="#fff" stroke="#222" stroke-dasharray="3 2"/><path d="M9 7l10 2 2 8-4 6-8-2-3-8z" fill="#fff" stroke="#222"/><path d="M1 18l6-2 2 6z" fill="#999"/></svg></b>
    <b class="w-[34px] h-[34px] flex items-center justify-center"><svg class="w-7 h-7" viewBox="0 0 28 28"><path d="M2 9l7-5 6 5 6-4 6 9-9 8-7-6-6 3z" fill="#fff" stroke="#222" stroke-width="1.300"/><path d="M9 4v7l6-2M15 16l6-5" fill="none" stroke="#222"/></svg></b>
    <b class="w-[34px] h-[34px] flex items-center justify-center"><svg class="w-7 h-7" viewBox="0 0 28 28"><path d="M2 6c10-3 19 2 22 16l-4 3C18 14 11 10 3 10z" fill="#c6b9c4" stroke="#555"/><path d="M3 8c8-1 16 3 19 15" fill="none" stroke="#c84a74"/></svg></b>
    <b class="w-[34px] h-[34px] flex items-center justify-center"><svg class="w-7 h-7" viewBox="0 0 28 28"><path d="M2 15l12-7 12 7-12 9z" fill="#fff" stroke="#222" stroke-width="1.300"/><path d="M7 5h14l5 10H2zM14 3v6M7 5l7 5 7-5" fill="none" stroke="#c81f2a"/></svg></b>
    <b class="w-[34px] h-[34px] flex items-center justify-center"><svg class="w-7 h-7" viewBox="0 0 28 28"><path d="M3 15C3 7 9 3 15 3s11 6 10 13-5 9-7 9H9c-3-1-6-5-6-10z" fill="#bdbdbd" stroke="#333" stroke-width="1.500"/><path d="M12 6c5-3 11 1 11 6l-9-1z" fill="#fff" stroke="#333"/><path d="M18 10v15" stroke="#c81f2a" stroke-width="2.500"/></svg></b>
    <b class="w-[34px] h-[34px] flex items-center justify-center"><svg class="w-7 h-7" viewBox="0 0 28 28"><path d="M2 8l11-5 10 9-11 13-10-5z" fill="#fff" stroke="#222" stroke-width="1.300"/><circle cx="13" cy="14" r="2.500" fill="#c81f2a" stroke="#222"/><path d="M2 8l11 6 10-2M12 25l1-11" fill="none" stroke="#222"/><path d="M22 10l5 4-6 3z" fill="#111"/></svg></b>
    <b class="w-[34px] h-[34px] flex items-center justify-center"><svg class="w-7 h-7" viewBox="0 0 28 28"><path d="M4 27V11c0-3 2-5 4-5h17" fill="none" stroke="#111" stroke-width="1.500"/><path d="M4 16c0-5 3-8 9-9" fill="none" stroke="#c81f2a" stroke-width="2"/><path d="M13 6h12" stroke="#111" stroke-width="2.500"/></svg></b>
    <b class="w-[34px] h-[34px] flex items-center justify-center"><svg class="w-7 h-7" viewBox="0 0 28 28"><path d="M4 27V6h23" fill="none" stroke="#111" stroke-width="1.500"/><path d="M4 18 13 6" stroke="#c81f2a" stroke-width="1.600"/></svg></b>
    <b class="w-[34px] h-[34px] flex items-center justify-center"><svg class="w-7 h-7" viewBox="0 0 28 28"><path d="M5 21 26 6M9 20h18" stroke="#111" stroke-width="1.400"/><path d="M11 12l3 8M2 21h12" stroke="#c81f2a" stroke-width="1.600"/><circle cx="11" cy="20" r="2.500" fill="#c81f2a"/></svg></b>
    <b class="w-[34px] h-[34px] flex items-center justify-center"><svg class="w-7 h-7" viewBox="0 0 28 28"><path d="M13 3h12v22h-6L5 15z" fill="#fff"/><path d="M13 3 6 11M25 24h-6L6 16" fill="none" stroke="#222" stroke-width="1.300"/><path d="M2 13l6 5 10 7 8 1" fill="none" stroke="#c81f2a" stroke-width="2.400"/></svg></b>
    <b class="w-[34px] h-[34px] flex items-center justify-center"><svg class="w-7 h-7" viewBox="0 0 28 28"><path d="M5 8l9-5 9 3 2 19-6 1H7z" fill="#fff" stroke="#222" stroke-width="1.300"/><path d="M7 9v16M14 8v18M20 8v17" fill="none" stroke="#333"/><path d="M2 17c8 2 16 2 24-1" stroke="#c81f2a" stroke-width="2" fill="none"/></svg></b>
    <b class="w-[34px] h-[34px] flex items-center justify-center"><svg class="w-7 h-7" viewBox="0 0 28 28"><path d="M15 2 4 17l8 8 14-1z" fill="#fff" stroke="#555"/><path d="M15 2l11 22M8 14c5 3 10 3 14 3" fill="none" stroke="#c81f2a"/><path d="M12 13c3 3 6 3 8 4l-3-7z" fill="#cfd5e8"/></svg></b>
    <b class="w-[34px] h-[34px] flex items-center justify-center"><svg class="w-7 h-7" viewBox="0 0 28 28"><path d="M2 16h4v9H2zM8 11h4v14H8zM14 8h4v15h-4zM20 4h4v17h-4z" fill="#fff" stroke="#444" stroke-width="1.300"/></svg></b>
    <b class="w-[34px] h-[34px] flex items-center justify-center"><svg class="w-7 h-7" viewBox="0 0 28 28"><path d="M3 7h3v15H3zM8 4h3v17H8zM13 3h3v22h-3zM18 4h3v18h-3zM23 7h3v14h-3z" fill="#ddd" stroke="#333"/></svg></b>
    <b class="w-[34px] h-[34px] flex items-center justify-center"><svg class="w-7 h-7" viewBox="0 0 28 28"><ellipse cx="15" cy="20" rx="10" ry="6" fill="#fff" stroke="#333"/><path d="M4 6h3v13H4zM9 3h3v15H9zM14 2h3v15h-3zM19 3h3v15h-3zM24 6h2v12h-2z" fill="#888" stroke="#222" stroke-width=".7"/></svg></b>
    <b class="w-[34px] h-[34px] flex items-center justify-center"><svg class="w-7 h-7" viewBox="0 0 28 28"><path d="M3 20c0-8 5-7 10-9 4-2 7-5 11-7v15c-4 2-7 4-11 5-4 1-7 2-10 3z" fill="#fff" stroke="#222" stroke-width="1.200"/><path d="M3 20c-1 2 0 5 0 7" fill="none" stroke="#777"/></svg></b>
    <b class="w-[34px] h-[34px] flex items-center justify-center"><svg class="w-7 h-7" viewBox="0 0 28 28"><path d="M1 14 14 6v15z" fill="#888"/><path d="M14 6 24 1v20l-10 6z" fill="#fff" stroke="#222" stroke-width="1.200"/><path d="M17 10l4-2v9l-4 2z" fill="#555"/></svg></b>
    <b class="w-[34px] h-[34px] flex items-center justify-center"><svg class="w-7 h-7" viewBox="0 0 28 28"><path d="M2 1l24 9v3L2 6zM2 8l24 7v3L2 12zM2 14l24 6v5L2 20z" fill="#fff" stroke="#333"/><path d="M2 1v20l7 2V4z" fill="#666"/></svg></b>
    <b class="w-[34px] h-[34px] flex items-center justify-center"><svg class="w-7 h-7" viewBox="0 0 28 28"><path d="M2 24 22 3l5 4-14 17z" fill="#ddd" stroke="#888"/><path d="M7 20l3 3M10 16l4 4M14 12l4 4M18 8l3 3" stroke="#888"/><path d="M14 24l14-8v5l-10 4z" fill="#aaa"/></svg></b>
    <b class="w-[34px] h-[34px] flex items-center justify-center"><svg class="w-7 h-7" viewBox="0 0 28 28"><path d="M1 7h6l1 4h6l1 4h6M5 2l10 5 12 3M1 25l26-12M1 20l20-8" fill="none" stroke="#111" stroke-width="1.300"/></svg></b>
    <b class="w-[34px] h-[34px] flex items-center justify-center"><svg class="w-7 h-7" viewBox="0 0 28 28"><path d="M2 5h7v4h5v4h4v4h-5v-4H8V9H2zM2 24l9-2 16-6M18 13h9M2 20h9v4" fill="none" stroke="#111" stroke-width="1.300"/></svg></b>
    <b class="w-[34px] h-[34px] flex items-center justify-center"><svg class="w-7 h-7" viewBox="0 0 28 28"><path d="M2 3l14 8 5 3h6M2 7l12 7M1 26l14-8 6-4M1 22l12-6M21 17h6" fill="none" stroke="#111" stroke-width="1.300"/></svg></b>
    <b class="w-[34px] h-[34px] flex items-center justify-center"><svg class="w-7 h-7" viewBox="0 0 28 28"><path d="M3 25V9C5 4 17 2 22 8c2 4 2 12 2 17z" fill="#bbb" stroke="#666"/><path d="M7 9l4 6M13 6l1 9M20 9l-5 6M4 15h19" stroke="#fff" stroke-width="1.400"/><path d="M3 21h24v5H3z" fill="#777"/></svg></b>
    <b class="w-[34px] h-[34px] flex items-center justify-center"><svg class="w-7 h-7" viewBox="0 0 28 28"><path d="M2 21 20 3l6 6-15 17z" fill="#999" stroke="#555"/><path d="M5 22 21 5M9 24 24 8" stroke="#333" stroke-width="1.400"/></svg></b>
    <b class="w-[34px] h-[34px] flex items-center justify-center"><svg class="w-7 h-7" viewBox="0 0 28 28"><path d="M10 5l14-3v13l-13 4z" fill="#fff" stroke="#555" stroke-width="1.800"/><path d="M4 23l20-5v3L8 26z" fill="#bbb" stroke="#888"/><path d="M11 19v4" stroke="#777" stroke-width="2"/></svg></b>
    <b class="w-[34px] h-[34px] flex items-center justify-center"><svg class="w-7 h-7" viewBox="0 0 28 28"><path d="M7 26V9l16-7v21" fill="none" stroke="#666" stroke-width="2.400"/><path d="M12 25V12l7-3v14" fill="none" stroke="#777" stroke-width="1.400"/><path d="M3 22l5 4" stroke="#aaa" stroke-width="3"/></svg></b>
    <b class="w-[34px] h-[34px] flex items-center justify-center"><svg class="w-7 h-7" viewBox="0 0 28 28"><path d="M5 8l19-6v18L5 26z" fill="#ddd" stroke="#333" stroke-width="1.400"/><path d="M10 7v17M15 5v17M20 4v17M5 13l19-5M5 19l19-5" stroke="#222" stroke-width="1.400"/></svg></b>
    <b class="w-[34px] h-[34px] flex items-center justify-center"><svg class="w-7 h-7" viewBox="0 0 28 28"><path d="M3 3h22v22H3z" fill="#666"/><path d="M3 7h22M3 12h22M3 17h22" stroke="#fff"/></svg></b>
  </div>
</div>

<!-- 3D viewport -->
<main class="flex-1 relative flex flex-col border-t-[3px] border-[#8e8e8e] border-l border-l-[#6f6f6f] overflow-hidden">
  <div class="h-[33px] bg-gradient-to-b from-[#e9ebeb] to-[#f7f8f8]"></div>
  <div class="flex-1 bg-[#cdcdca]"></div>
  <svg class="absolute left-[-1px] top-[-3px]" width="1366" height="430" viewBox="0 233 1366 430">
    <path d="M1005 269l70 16" stroke="#111" stroke-dasharray="4 3" fill="none"/>
    <path d="M1005 269l70 12" stroke="#3da83d" fill="none"/>
    <path d="M1353 345l13 6" stroke="#3da83d" fill="none"/>
    <g stroke="#111" stroke-width="2" stroke-linejoin="round">
      <path d="M592 315 853 323 728 367 599 360 636 352 593 350z" fill="#b5c2cd"/>
      <path d="M334 343 592 315 593 350 465 343 432 350z" fill="#757d82"/>
      <path d="M465 343 593 350 636 352 599 360 602 449 473 433z" fill="#b5c2cd"/>
      <path d="M334 343 432 350 440 442 404 452 347 443z" fill="#b5c2cd"/>
      <path d="M432 350 465 343 473 433 440 442z" fill="#757d82"/>
      <path d="M402 455 473 433 602 449 601 467 571 480z" fill="#666b6f"/>
      <path d="M402 455 571 480 571 496 404 469z" fill="#b5c2cd"/>
      <path d="M571 480 602 467 601 480 571 496z" fill="#8e979f"/>
      <path d="M618 355 636 352 636 360 599 360z" fill="#757d82"/>
      <path d="M599 360 728 367 726 498 601 480z" fill="#b5c2cd" stroke-width="2.200"/>
      <path d="M728 367 853 323 849 397 726 498z" fill="#757d82" stroke-width="2.200"/>
    </g>
    <path d="M732 364 850 324" stroke="#dfe6ee" stroke-width=".7"/>
    <g fill="#111">
      <circle cx="334" cy="343" r="2.400"/><circle cx="592" cy="315" r="2.400"/><circle cx="853" cy="323" r="2.400"/><circle cx="728" cy="367" r="2.400"/><circle cx="432" cy="350" r="2.400"/><circle cx="465" cy="343" r="2.400"/><circle cx="347" cy="443" r="2.400"/><circle cx="402" cy="455" r="2.400"/><circle cx="404" cy="469" r="2.400"/><circle cx="571" cy="480" r="2.400"/><circle cx="571" cy="496" r="2.400"/><circle cx="726" cy="498" r="2.400"/><circle cx="601" cy="480" r="2.400"/><circle cx="849" cy="397" r="2.400"/><circle cx="440" cy="442" r="2.400"/><circle cx="473" cy="433" r="2.400"/><circle cx="636" cy="352" r="2.400"/>
    </g>
  </svg>
</main>

<!-- measurements -->
<section class="h-[40px] shrink-0 flex border-t-2 border-[#fafafa]">
  <div class="w-[297px] flex items-center pl-[4px] border-r border-b border-[#b5b5b5]">
    <i class="w-[11px] h-[30px] border-l border-dotted border-[#999]"></i>
    <span class="w-[122px] text-[11px] tracking-[-0.15px]">Measurements</span>
    <div class="w-[156px] h-[17px] border border-[#aab6c2] bg-[#eef0f2]"></div>
  </div>
</section>

<!-- status bar -->
<footer class="h-[27px] shrink-0 flex items-center pl-[6px]">
  <svg class="w-[14px] h-[14px]" viewBox="0 0 14 14"><circle cx="7" cy="7" r="6.500" fill="#ddd" stroke="#aaa"/><path d="M7 2c3 0 3 3 2 5l-2 5-2-5C4 5 4 2 7 2z" fill="#8a8a8a"/></svg>
  <svg class="w-[14px] h-[14px] ml-[16px]" viewBox="0 0 14 14"><circle cx="7" cy="7" r="6" fill="#fff" stroke="#111" stroke-width="1.400"/><circle cx="7" cy="4" r="1.200" fill="#111"/><path d="M7 6v5" stroke="#111" stroke-width="2"/></svg>
  <svg class="w-[14px] h-[14px] ml-[16px]" viewBox="0 0 14 14"><circle cx="7" cy="7" r="6.500" fill="#aaa" stroke="#999"/><circle cx="7" cy="5" r="2.300" fill="#e5e5e5"/><path d="M3 12c0-5 8-5 8 0z" fill="#e5e5e5"/></svg>
  <i class="w-px h-[8px] bg-[#999] ml-[12px] mr-[10px]"></i>
  <span class="text-[12px] tracking-[0.2px]">Scale and stretch selected entities.</span>
</footer>

<!-- taskbar -->
<div class="relative h-[40px] shrink-0 bg-[#0b1119] flex items-center text-white">
  <i class="flex w-[48px] justify-center"><svg class="w-[17px] h-[17px]" viewBox="0 0 17 17"><path d="M0 2.500 7 1.500V8H0zM8 1.300 17 0v8H8zM0 9h7v6.500L0 14.500zM8 9h9v8l-9-1.300z" fill="#fff"/></svg></i>
  <i class="flex w-[48px] justify-center"><svg class="w-[18px] h-[18px]" viewBox="0 0 18 18"><circle cx="11" cy="7" r="5.500" fill="none" stroke="#fff" stroke-width="1.200"/><path d="M7 11l-5.500 6" stroke="#fff" stroke-width="1.300"/></svg></i>
  <i class="flex w-[49px] justify-center"><svg class="w-[18px] h-[18px]" viewBox="0 0 18 18"><path d="M3 4h10v9H3zM1 1h12M1 16h12" fill="none" stroke="#fff" stroke-width="1.200"/><path d="M15.500 3v3M15.500 8v3M15.500 13v3" stroke="#fff" stroke-width="1.400"/></svg></i>
  <i class="flex w-[50px] justify-center"><svg class="w-[24px] h-[24px]" viewBox="0 0 24 24"><path d="M4 14h17c1-7-3-12-9-12C6 2 2 7 2 13c0 6 5 10 11 10 3 0 5-1 7-2v-5c-4 3-11 3-12-2zM8 10c1-3 7-3 8 0z" fill="#0a78d4" fill-rule="evenodd"/></svg></i>
  <i class="flex w-[49px] justify-center"><svg class="w-[24px] h-[24px]" viewBox="0 0 24 24"><path d="M2 3h9l2 3h9v17H2z" fill="#f4d673"/><path d="M2 7h20v2H2z" fill="#f9e7a5"/><path d="M7 13h10l3 6v3H4v-3z" fill="#54acd6"/><path d="M10 18h4v5h-4z" fill="#f4d673"/></svg></i>
  <i class="flex w-[49px] justify-center"><svg class="w-[24px] h-[26px]" viewBox="0 0 24 26"><path d="M8 7V4c0-4 8-4 8 0v3" fill="none" stroke="#fff" stroke-width="1.500"/><path d="M1 7h22v17c0 1-1 2-2 2H3c-1 0-2-1-2-2z" fill="#fff"/><path d="M7 11h4.500v4.500H7z" fill="#f25022"/><path d="M12.500 11H17v4.500h-4.500z" fill="#7fba00"/><path d="M7 16.500h4.500V21H7z" fill="#00a4ef"/><path d="M12.500 16.500H17V21h-4.500z" fill="#ffb900"/></svg></i>
  <i class="flex w-[49px] justify-center"><svg class="w-[24px] h-[20px]" viewBox="0 0 24 20"><path d="M0 8 12 1l12 7v12H0z" fill="#fff"/><path d="M0 8l11 4 13-8-9 13-4-5" fill="none" stroke="#0b1119" stroke-width="1.300"/></svg></i>
  <i class="flex w-[49px] justify-center not-italic"><span class="w-[24px] h-[32px] bg-[#f5f0e8] flex items-center justify-center text-[#b3222c] text-[27px] font-bold [font-family:'Liberation_Sans',sans-serif]">A</span></i>
  <i class="flex w-[49px] justify-center not-italic"><span class="w-[22px] h-[27px] bg-[#0a2233] border border-[#2fa8e0] flex items-center justify-center text-[#34b0e8] text-[14px] [font-family:'Liberation_Sans',sans-serif]">Ps</span></i>
  <i class="flex w-[49px] justify-center not-italic"><span class="relative w-[24px] h-[28px] bg-[#2b579a] flex items-center pl-[1px] text-white text-[11px] font-bold [font-family:'Liberation_Sans',sans-serif]">W<b class="absolute right-0 top-[5px] w-[9px] h-[18px] bg-[#e8eef7] border-y-[3px] border-[#9db8dc]"></b></span></i>
  <i class="flex w-[49px] justify-center"><svg class="w-[24px] h-[28px]" viewBox="0 0 24 28"><ellipse cx="12" cy="14" rx="8" ry="11.500" fill="none" stroke="#d0121d" stroke-width="5.500"/></svg></i>
  <i class="flex w-[49px] justify-center not-italic"><span class="w-[24px] h-[32px] bg-[#3b5998] flex items-center justify-end pr-[5px] pt-[4px] text-white text-[26px] leading-[28px] font-bold [font-family:'Liberation_Sans',sans-serif]">f</span></i>
  <i class="flex w-[49px] justify-center"><svg class="w-[26px] h-[26px]" viewBox="0 0 26 26"><path d="M15 2A11.500 11.500 0 1 0 24 11" fill="none" stroke="#fff" stroke-width="3"/><circle cx="13" cy="13" r="4.500" fill="none" stroke="#fff" stroke-width="3"/><path d="M14 0l6 4-5 3z" fill="#fff"/></svg></i>
  <i class="flex w-[49px] justify-center"><svg class="w-[24px] h-[26px]"  viewBox="0 0 28 28"><path d="M3 8 14 2l10 5 1 12-9 7-10-4z" fill="#d5272f"/><path d="M8 9l8-3 4 3-8 2v3l8-2v3l-8 3" fill="none" stroke="#fff" stroke-width="1.800"/></svg></i>

  <div class="ml-auto flex items-center h-full pr-[4px]">
    <svg class="w-[16px] h-[16px]" viewBox="0 0 16 16"><circle cx="5" cy="9" r="2.500" fill="none" stroke="#fff"/><path d="M1 15c0-4 7-4 8 0" fill="none" stroke="#fff"/><circle cx="11" cy="5" r="3" fill="none" stroke="#fff"/><path d="M9 9c3-1 5 0 6 3" fill="none" stroke="#fff"/></svg>
    <svg class="w-[14px] h-[8px] ml-[20px]" viewBox="0 0 14 8"><path d="M1 7l6-6 6 6" fill="none" stroke="#fff" stroke-width="1.200"/></svg>
    <svg class="w-[16px] h-[12px] ml-[9px]" viewBox="0 0 16 12"><path d="M5 3h10v7H5zM1 2v5M4 2v5M0 4h5" fill="none" stroke="#fff"/></svg>
    <svg class="w-[20px] h-[18px] ml-[5px]" viewBox="0 0 20 18"><path d="M1 1h5v5H1zM3 6v8h6M7 3h10v7" fill="none" stroke="#fff"/><rect x="10" y="9" width="9" height="9" rx="2" fill="#e53e3e"/><path d="M12.500 11.500l4 4M16.500 11.500l-4 4" stroke="#fff"/></svg>
    <svg class="w-[18px] h-[14px] ml-[4px]" viewBox="0 0 18 14"><path d="M1 5h3l4-4v12l-4-4H1z" fill="none" stroke="#fff"/><path d="M10 5c1 1 1 3 0 4" fill="none" stroke="#fff"/><path d="M12.500 3c2 2 2 6 0 8M15 1c3 3 3 9 0 12" fill="none" stroke="#777"/></svg>
    <div class="w-[42px] ml-[1px] text-center text-[12px] leading-[18px]">ENG<br>UK</div>
    <div class="w-[62px] ml-[1px] text-center text-[12px] leading-[18px] tracking-[-0.4px]">00:42<br>01/07/2020</div>
    <svg class="w-[18px] h-[18px] ml-[16px] mr-[20px]" viewBox="0 0 18 18"><path d="M1 1h16v12H9l-3 4v-4H1z" fill="#fff"/><path d="M4 4h10M4 7h10M4 10h6" stroke="#0b1119"/></svg>
  </div>
  <i class="absolute left-[200px] bottom-0 w-[40px] h-[2px] bg-[#76b9ed]"></i>
  <i class="absolute left-[592px] bottom-0 w-[40px] h-[2px] bg-[#76b9ed]"></i>
  <i class="absolute left-[641px] bottom-0 w-[40px] h-[2px] bg-[#76b9ed]"></i>
</div>

<!-- default tray window -->
<aside class="absolute left-[1075px] top-[177px] w-[279px] h-[481px] bg-[#f4f7fb] border border-[#9db7d3] border-r-[#707070] border-b-[#707070] border-r-2 flex flex-col pl-[1px] pr-[3px]">
  <div class="-ml-[1px] -mr-[3px] h-[25px] bg-[#9db7d3] flex items-center justify-between pl-[3px] pr-[7px] shrink-0 text-[11px] font-semibold">
    <span>Default Tray</span>
    <span class="w-[12px] h-[12px] bg-[#c9464c] text-white text-[9px] leading-[11px] text-center font-bold">x</span>
  </div>
  <div class="h-[18px] mb-px flex items-center bg-gradient-to-b from-[#f1f1f1] to-[#bcbcbc] pl-[9px] pr-[4px]">
    <svg class="w-[8px] h-[8px]" viewBox="0 0 8 8"><path d="M1 0l6 4-6 4z" fill="#111"/></svg>
    <span class="ml-[5px] text-[12px] tracking-[-0.3px]">Entity Info</span>
    <span class="ml-auto w-[13px] h-[13px] bg-[#f0f0f0] border border-[#999] text-[10px] leading-[10px] text-center">×</span>
  </div>
  <div class="h-[18px] flex items-center bg-gradient-to-b from-[#f1f1f1] to-[#bcbcbc] pl-[9px] pr-[4px]">
    <svg class="w-[8px] h-[8px]" viewBox="0 0 8 8"><path d="M0 1h8L4 7z" fill="#111"/></svg>
    <span class="ml-[5px] text-[12px] tracking-[-0.3px]">Materials</span>
    <span class="ml-auto w-[13px] h-[13px] bg-[#f0f0f0] border border-[#999] text-[10px] leading-[10px] text-center">×</span>
  </div>

  <div class="bg-[#f0f0f0] h-[267px] flex flex-col shrink-0 border-b-2 border-[#777]">
    <div class="h-[75px] flex pt-[3px] pl-[2px] border-b border-[#a8a8a8] shrink-0">
      <div class="relative w-[66px] h-[70px] bg-[#ffffa6] border border-[#b4b4b4]">
        <svg class="absolute right-[1px] bottom-[1px] w-[9px] h-[9px]" viewBox="0 0 9 9"><path d="M8 1v7H1z" fill="none" stroke="#a0a08a"/></svg>
      </div>
      <div class="ml-[4px] w-[172px] h-[18px] bg-white border-t border-l border-[#777] pl-[4px] text-[12px] tracking-[0.2px] leading-[16px]">0048_PaleGoldenrod</div>
      <div class="ml-[3px] w-[24px] flex flex-col items-center">
        <svg class="w-[14px] h-[17px]" viewBox="0 0 14 17"><path d="M2 0h10v5H2z" fill="#111"/><path d="M1 6h12v11H1z" fill="#111"/><path d="M3 2h8" stroke="#fff"/><path d="M4 11h6M7 8v6" stroke="#fff" stroke-width="1.500"/></svg>
        <svg class="w-[20px] h-[20px] mt-[3px]" viewBox="0 0 20 20"><path d="M6 4l9-3 4 3v9l-9 4-4-4z" fill="#333"/><path d="M7 5l8-3 3 2-8 3zM7 8l10-3" stroke="#d8d3bf" fill="#d8d3bf" stroke-width=".7"/><circle cx="6" cy="14" r="5" fill="#fff" stroke="#111"/><path d="M3 14h6M6 11v6" stroke="#111" stroke-width="1.200"/></svg>
        <svg class="w-[22px] h-[22px] mt-[3px]" viewBox="0 0 22 22"><path d="M0 0h22v22H0z" fill="#fff"/><path d="M0 0l22 22H0z" fill="#a5b5c4"/></svg>
      </div>
    </div>
    <div class="h-[28px] flex items-end pl-[2px] justify-between pr-[6px] shrink-0 text-[11.5px]">
      <div class="flex items-end">
        <span class="h-[22px] w-[42px] pl-[4px] leading-[20px] border-r border-[#999]">Select</span>
        <span class="h-[20px] w-[40px] pl-[3px] leading-[20px] border-r border-[#999]">Edit</span>
      </div>
      <svg class="w-[18px] h-[20px] mb-[2px]" viewBox="0 0 18 20"><path d="M1 18l2-6 7-7 3 3-7 7z" fill="#caa862" stroke="#444"/><path d="M9 4l3-3c2-1 5 2 3 4l-3 3z" fill="#333"/></svg>
    </div>
    <div class="h-[30px] flex items-center pl-[8px] pt-[3px] border-t border-[#e3e3e3] shrink-0">
      <svg class="w-[13px] h-[13px]" viewBox="0 0 13 13"><path d="M1 6.500 7 1v3h5v5H7v3z" fill="#f5f5f5" stroke="#999"/></svg>
      <svg class="w-[13px] h-[13px] ml-[11px]" viewBox="0 0 13 13"><path d="M12 6.500 6 1v3H1v5h5v3z" fill="#f5f5f5" stroke="#999"/></svg>
      <svg class="w-[17px] h-[16px] ml-[9px]" viewBox="0 0 17 16"><path d="M8.500 1 1 8h2v7h11V8h2z" fill="#fff" stroke="#111" stroke-width="1.300"/><path d="M6.500 9h4v6h-4z" fill="#111"/></svg>
      <div class="ml-[5px] w-[168px] h-[22px] bg-white border-t border-l border-[#777] flex items-center pl-[3px] text-[12px]">
        <span>Tile</span>
        <span class="ml-auto w-[16px] h-[18px] mr-[1px] bg-[#e9e9e9] border-r border-b border-[#777] flex items-center justify-center"><svg class="w-[8px] h-[5px]" viewBox="0 0 8 5"><path d="M0 0h8L4 5z" fill="#111"/></svg></span>
      </div>
      <svg class="w-[14px] h-[16px] ml-[7px]" viewBox="0 0 14 16"><path d="M1 3h7V0l6 8-6 8v-3H1z" fill="#111"/><path d="M2 5h6v6H2z" fill="#5d88bd"/></svg>
    </div>
    <div class="h-[129px] flex bg-white overflow-hidden pl-[3px]">
      <div class="w-[210px] h-[129px] overflow-hidden pt-[1px] grid grid-cols-[repeat(4,50px)] auto-rows-[50px] gap-[2px]">
        <svg class="border border-[#aaa] p-px" viewBox="0 0 46 46"><rect width="46" height="46" fill="#d6ddd9"/><rect width="46" height="46" filter="url(#n)" opacity=".14"/></svg>
        <svg class="border border-[#aaa] p-px" viewBox="0 0 46 46"><rect width="46" height="46" fill="#7f97a2"/><path d="M0 0h22v11H0z" fill="#5e8a9a"/><path d="M24 0h22v12H24z" fill="#8e98a5"/><path d="M24 14h22v14H24z" fill="#6793a6"/><path d="M0 13h22v16H0z" fill="#8ea3a5"/><path d="M0 31h22v15H0z" fill="#7d92a8"/><path d="M24 30h22v16H24z" fill="#6f95a5"/><rect width="46" height="46" filter="url(#n)" opacity=".25"/></svg>
        <svg class="border border-[#aaa] p-px" viewBox="0 0 46 46"><rect width="46" height="46" fill="#d8cfb2"/><path d="M23 0v46M0 23h46" stroke="#c8bfa2" stroke-width=".6"/><rect width="46" height="46" filter="url(#n)" opacity=".06"/></svg>
        <svg class="border border-[#aaa] p-px" viewBox="0 0 46 46"><rect width="46" height="46" fill="#cfd3cd"/><path d="M0 0h7l16 16L39 0h7v7L30 23l16 16v7h-7L23 30 7 46H0v-7l16-16L0 7z" fill="#77777c"/><path d="M12 0h8l-4 7zM26 0h8l-4 7zM12 46h8l-4-7zM26 46h8l-4-7zM0 12v8l7-4zM46 12v8l-7-4zM0 26v8l7-4zM46 26v8l-7-4zM15 18h16l-8 5zM15 28h16l-8-5z" fill="#0d0d0d"/><path d="M19 19l4 4 4-4-4-4zM19 27l4-4 4 4-4 4z" fill="#f5f5f5"/></svg>
        <svg class="border border-[#aaa] p-px" viewBox="0 0 46 46"><rect width="46" height="46" fill="#d4b9ac"/><path d="M23 0v46M0 23h46" stroke="#b89a8c" stroke-width=".6"/><path d="M23 23C14 21 6 14 5 5c9 1 16 9 18 18zM23 23c9-2 17-9 18-18-9 1-16 9-18 18zM23 23C14 25 6 32 5 41c9-1 16-9 18-18zM23 23c9 2 17 9 18 18-9-1-16-9-18-18z" fill="none" stroke="#5f7a55" stroke-width="1.200"/></svg>
        <svg class="border border-[#aaa] p-px" viewBox="0 0 46 46"><rect width="46" height="46" fill="#e2d7cc"/><path d="M0 12h26M26 0v24M0 30h46M12 12v18M26 24h20M34 24v22M16 30v16" stroke="#a09a88" stroke-width=".7"/><rect width="46" height="46" filter="url(#m)" opacity=".25"/></svg>
        <svg class="border border-[#aaa] p-px" viewBox="0 0 46 46"><rect width="46" height="46" fill="#e6d6a8"/><path d="M0 23h46M23 0v46" stroke="#d0bd8a" stroke-width=".6"/><path d="M0 23h46v23H0z" fill="#dcc78f" opacity=".6"/></svg>
        <svg class="border border-[#aaa] p-px" viewBox="0 0 46 46"><rect width="46" height="46" fill="#a39a96"/><rect width="46" height="46" filter="url(#n)" opacity=".6"/></svg>
        <svg class="border border-[#aaa] p-px" viewBox="0 0 46 46"><rect width="46" height="46" fill="#dedede"/><path d="M18 0h28v16H32v30H18z" fill="#1b1b1b"/><rect width="46" height="46" filter="url(#m)" opacity=".2"/></svg>
        <svg class="border border-[#aaa] p-px" viewBox="0 0 46 46"><rect width="46" height="46" fill="#dfe2f0"/><rect width="46" height="46" filter="url(#m)" opacity=".35"/></svg>
        <svg class="border border-[#aaa] p-px" viewBox="0 0 46 46"><rect width="46" height="46" fill="#f0efec"/><rect width="46" height="46" filter="url(#m)" opacity=".55"/></svg>
        <svg class="border border-[#aaa] p-px" viewBox="0 0 46 46"><rect width="46" height="46" fill="#7f9c9c"/><rect width="46" height="46" filter="url(#n)" opacity=".12"/></svg>
      </div>
      <div class="ml-auto w-[16px] bg-[#f0f0f0] flex flex-col items-center justify-between pb-[6px] pt-[5px] relative">
        <svg class="w-[9px] h-[6px]" viewBox="0 0 9 6"><path d="M.5 5l4-4 4 4" fill="none" stroke="#555" stroke-width="1.400"/></svg>
        <span class="absolute top-[16px] left-0 w-[16px] h-[16px] bg-[#cdcdcd]"></span>
        <svg class="w-[9px] h-[6px]" viewBox="0 0 9 6"><path d="M.5 1l4 4 4-4" fill="none" stroke="#555" stroke-width="1.400"/></svg>
      </div>
    </div>
  </div>

  <div class="mt-[3px] flex flex-col gap-px">
    <div class="h-[18px] flex items-center bg-gradient-to-b from-[#f1f1f1] to-[#bcbcbc] pl-[9px] pr-[4px]"><svg class="w-[8px] h-[8px]" viewBox="0 0 8 8"><path d="M1 0l6 4-6 4z" fill="#111"/></svg><span class="ml-[5px] text-[12px] tracking-[-0.3px]">Components</span><span class="ml-auto w-[13px] h-[13px] bg-[#f0f0f0] border border-[#999] text-[10px] leading-[10px] text-center">×</span></div>
    <div class="h-[18px] flex items-center bg-gradient-to-b from-[#f1f1f1] to-[#bcbcbc] pl-[9px] pr-[4px]"><svg class="w-[8px] h-[8px]" viewBox="0 0 8 8"><path d="M1 0l6 4-6 4z" fill="#111"/></svg><span class="ml-[5px] text-[12px] tracking-[-0.3px]">Styles</span><span class="ml-auto w-[13px] h-[13px] bg-[#f0f0f0] border border-[#999] text-[10px] leading-[10px] text-center">×</span></div>
    <div class="h-[18px] flex items-center bg-gradient-to-b from-[#f1f1f1] to-[#bcbcbc] pl-[9px] pr-[4px]"><svg class="w-[8px] h-[8px]" viewBox="0 0 8 8"><path d="M1 0l6 4-6 4z" fill="#111"/></svg><span class="ml-[5px] text-[12px] tracking-[-0.3px]">Layers</span><span class="ml-auto w-[13px] h-[13px] bg-[#f0f0f0] border border-[#999] text-[10px] leading-[10px] text-center">×</span></div>
    <div class="h-[18px] flex items-center bg-gradient-to-b from-[#f1f1f1] to-[#bcbcbc] pl-[9px] pr-[4px]"><svg class="w-[8px] h-[8px]" viewBox="0 0 8 8"><path d="M1 0l6 4-6 4z" fill="#111"/></svg><span class="ml-[5px] text-[12px] tracking-[-0.3px]">Scenes</span><span class="ml-auto w-[13px] h-[13px] bg-[#f0f0f0] border border-[#999] text-[10px] leading-[10px] text-center">×</span></div>
    <div class="h-[18px] flex items-center bg-gradient-to-b from-[#f1f1f1] to-[#bcbcbc] pl-[9px] pr-[4px]"><svg class="w-[8px] h-[8px]" viewBox="0 0 8 8"><path d="M1 0l6 4-6 4z" fill="#111"/></svg><span class="ml-[5px] text-[12px] tracking-[-0.3px]">Shadows</span><span class="ml-auto w-[13px] h-[13px] bg-[#f0f0f0] border border-[#999] text-[10px] leading-[10px] text-center">×</span></div>
    <div class="h-[18px] flex items-center bg-gradient-to-b from-[#f1f1f1] to-[#bcbcbc] pl-[9px] pr-[4px]"><svg class="w-[8px] h-[8px]" viewBox="0 0 8 8"><path d="M1 0l6 4-6 4z" fill="#111"/></svg><span class="ml-[5px] text-[12px] tracking-[-0.3px]">Instructor</span><span class="ml-auto w-[13px] h-[13px] bg-[#f0f0f0] border border-[#999] text-[10px] leading-[10px] text-center">×</span></div>
  </div>
</aside>
</body>
</html>
